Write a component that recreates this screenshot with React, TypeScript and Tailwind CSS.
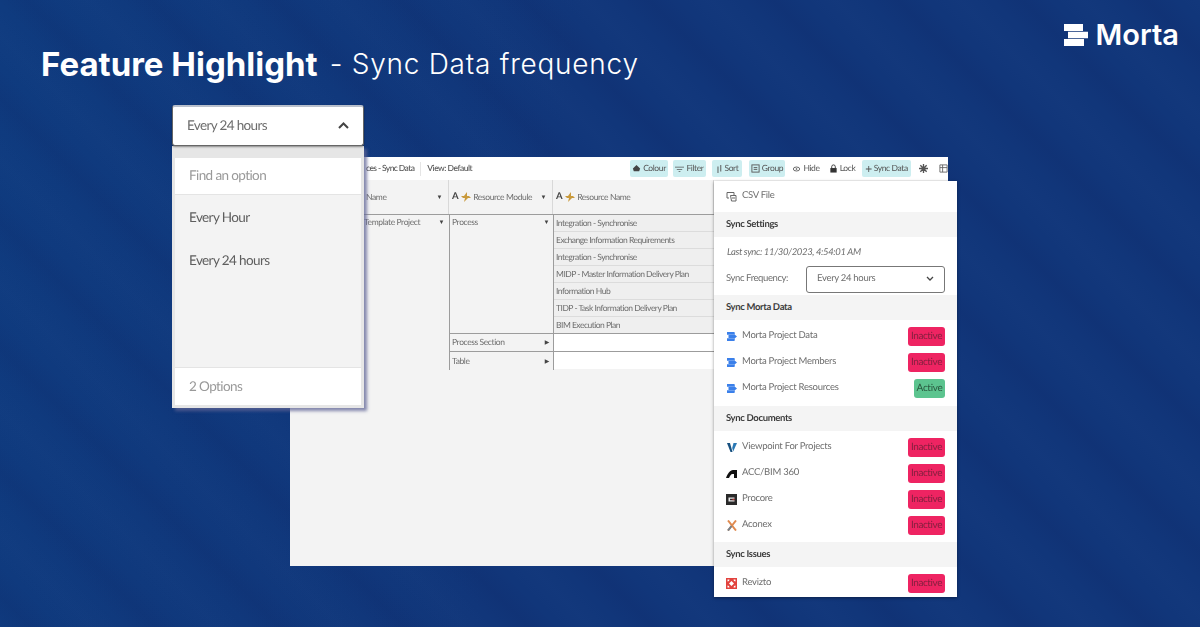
const lato = "font-['Lato','Liberation_Sans',sans-serif] [text-rendering:geometricPrecision]";

function Bolt() {
  return (
    <svg width="10" height="10" viewBox="0 0 10 10" className="shrink-0">
      <path d="M6 0 3 4H0l2 2h2L3 10l4-4h3L8 4H6z" fill="#c99a3c" />
    </svg>
  );
}

function HeaderCell({ label, className, icons = true, arrow = true }: { label: string; className: string; icons?: boolean; arrow?: boolean }) {
  return (
    <div className={`flex items-center gap-[2px] h-full whitespace-nowrap border-r border-[#d8d8d8] text-[8.5px] tracking-[-0.4px] text-[#6e6e6e] ${className}`}>
      {icons && <span className="font-bold text-[9.5px] text-[#444] mr-[1px]">A</span>}
      {icons && <Bolt />}
      <span>{label}</span>
      {arrow && <span className="ml-auto text-[6px] text-[#444]">▼</span>}
    </div>
  );
}

function ToolBtn({ label, icon, on, w }: { label: string; icon: React.ReactNode; on?: boolean; w: string }) {
  return (
    <div className={`flex items-center justify-center gap-[2px] h-[17px] rounded-[2px] text-[8.5px] tracking-[-0.4px] whitespace-nowrap text-[#555] ${w} ${on ? "bg-[#cdeef0]" : ""}`}>
      {icon}
      <span>{label}</span>
    </div>
  );
}

function Section({ title }: { title: string }) {
  return (
    <div className="h-[25px] flex items-center bg-[#f4f4f4] pl-[12px] pt-[2px] text-[9.500px] tracking-[-0.35px] font-bold text-[#3c3c3c]">{title}</div>
  );
}

function Status({ active }: { active?: boolean }) {
  return active ? (
    <span className="h-[19px] w-[31px] flex items-center justify-center rounded-[3px] bg-[#5cc48f] text-[10px] tracking-[-0.3px] text-[#2a5a40]">Active</span>
  ) : (
    <span className="h-[19px] w-[37px] flex items-center justify-center rounded-[3px] bg-[#ee2462] text-[10px] tracking-[-0.4px] text-[#85203f]">Inactive</span>
  );
}

function Row({ icon, label, active }: { icon: React.ReactNode; label: string; active?: boolean }) {
  return (
    <div className="h-[26px] flex items-center pl-[12px] pr-[12px]">
      <span className="w-[11px] h-[12px] flex items-center justify-center shrink-0">{icon}</span>
      <span className="ml-[5px] text-[9.500px] tracking-[-0.25px] text-[#6e6e6e]">{label}</span>
      <span className="ml-auto">
        <Status active={active} />
      </span>
    </div>
  );
}

function SmallMorta() {
  return (
    <svg width="10" height="9" viewBox="0 0 10 9">
      <path d="M0 0h7.500l.5 2.800H0zM1.500 3.100h6.700L10 4.500 8.200 6H1.500zM0 6.200h8L7.500 9H0z" fill="#3b80ea" />
    </svg>
  );
}

const cellRows = [
  "Integration - Synchronise",
  "Exchange Information Requirements",
  "Integration - Synchronise",
  "MIDP - Master Information Delivery Plan",
  "Information Hub",
  "TIDP - Task Information Delivery Plan",
  "BIM Execution Plan",
];

function TableWindow() {
  return (
    <div className={`absolute left-[290px] top-[157px] w-[658px] h-[409px] bg-[#f3f3f3] overflow-hidden ${lato} blur-[0.3px]`}>
      <div className="h-[23px] bg-white flex items-center pl-[76px]">
        <span className="text-[8.500px] tracking-[-0.6px] font-medium text-[#555]">ces - Sync Data</span>
        <span className="w-px h-[14px] bg-[#e5e5e5] mx-[6px]" />
        <span className="text-[8.500px] tracking-[-0.5px] font-medium text-[#555]">View: Default</span>
        <div className="absolute left-[340px] top-[3px] flex items-center">
          <ToolBtn on w="w-[38px]" label="Colour" icon={<svg width="9" height="9" viewBox="0 0 10 10"><path d="M1 5 5 1l4 4-1 3H2z" fill="#444" /></svg>} />
          <ToolBtn on w="w-[33px] ml-[5px]" label="Filter" icon={<svg width="9" height="9" viewBox="0 0 10 10"><path d="M0 3h10v1H0zM2 5.500h6v1H2zM4 8h2v1H4z" fill="#555" /></svg>} />
          <ToolBtn on w="w-[30px] ml-[6px]" label="Sort" icon={<svg width="7" height="8" viewBox="0 0 8 10"><path d="M1.500 2h1.200v8H1.500zM5 0h1.200v8H5z" fill="#555" /></svg>} />
          <ToolBtn on w="w-[36px] ml-[7px]" label="Group" icon={<svg width="9" height="9" viewBox="0 0 10 10"><rect x="1" y="1" width="8" height="8" fill="none" stroke="#555" /><path d="M3 4h4M3 6h4" stroke="#555" /></svg>} />
          <ToolBtn w="w-[30px] ml-[6px]" label="Hide" icon={<svg width="9" height="8" viewBox="0 0 10 10"><ellipse cx="5" cy="5" rx="4" ry="2.500" fill="none" stroke="#444" /><circle cx="5" cy="5" r="1" fill="#444" /></svg>} />
          <ToolBtn w="w-[30px] ml-[6px]" label="Lock" icon={<svg width="9" height="9" viewBox="0 0 10 10"><rect x="1.500" y="4.500" width="7" height="5" fill="#333" /><path d="M3 5V3a2 2 0 0 1 4 0v2" fill="none" stroke="#333" /></svg>} />
          <ToolBtn on w="w-[49px] ml-[5px]" label="Sync Data" icon={<span className="text-[12px] leading-none">+</span>} />
          <svg width="9" height="9" viewBox="0 0 10 10" className="ml-[8px]"><path d="M5 0v10M0 5h10M1.500 1.500l7 7M8.500 1.500l-7 7" stroke="#555" strokeWidth="1.500" /></svg>
          <svg width="9" height="9" viewBox="0 0 10 10" className="ml-[11px]"><path d="M1 1h8v8H1zM1 4h8M4 1v8" fill="none" stroke="#666" /></svg>
        </div>
      </div>
      <div className="h-[35px] flex items-center border-b border-[#9c9c9c] w-[424px]">
        <HeaderCell label="Name" icons={false} className="w-[159px] pl-[76px] pr-[6px]" />
        <HeaderCell label="Resource Module" className="w-[104px] pl-[3px] pr-[6px]" />
        <HeaderCell label="Resource Name" arrow={false} className="w-[161px] pl-[3px] pr-[6px]" />
      </div>
      <div className="flex items-start w-[424px]">
        <div className="w-[159px] h-[155px] pl-[74px] pt-[1px] text-[8.500px] tracking-[-0.4px] text-[#6e6e6e] flex items-start justify-between pr-[5px]">
          <span>Template Project</span>
          <span className="text-[6px] text-[#444] mt-[2px]">▼</span>
        </div>
        <div className="w-[105px] flex flex-col border-l border-[#9c9c9c] border-r text-[8.500px] tracking-[-0.4px] text-[#6e6e6e]">
          <div className="h-[119px] border-b border-[#9c9c9c] flex justify-between pl-[2px] pr-[4px] pt-[1px]">
            <span>Process</span>
            <span className="text-[6px] text-[#444] mt-[2px]">▼</span>
          </div>
          <div className="h-[18px] border-b border-[#9c9c9c] flex items-center justify-between pl-[2px] pr-[4px]">
            <span>Process Section</span>
            <span className="text-[6px] text-[#444]">▶</span>
          </div>
          <div className="h-[18px] flex items-center justify-between pl-[2px] pr-[4px]">
            <span>Table</span>
            <span className="text-[6px] text-[#444]">▶</span>
          </div>
        </div>
        <div className="w-[160px] flex flex-col text-[8.500px] tracking-[-0.5px] text-[#6e6e6e]">
          <div className="h-[119px] border-b border-[#9c9c9c] flex flex-col bg-[#efefef]">
            {cellRows.map((r, i) => (
              <div key={i} className="h-[17px] shrink-0 border-b border-[#dcdcdc] last:border-b-0 flex items-center pl-[2px] whitespace-nowrap">{r}</div>
            ))}
          </div>
          <div className="h-[18px] bg-white border-b border-[#9c9c9c]" />
          <div className="h-[17px] bg-white" />
        </div>
      </div>
    </div>
  );
}

function SidePanel() {
  return (
    <div className={`absolute left-[714px] top-[181px] w-[243px] h-[416px] bg-white shadow-[0_1px_3px_rgba(0,0,0,0.4)] flex flex-col ${lato} blur-[0.3px]`}>
      <div className="h-[31px] flex items-center pl-[12px]">
        <svg width="11" height="11" viewBox="0 0 11 11"><path d="M1 4V1.500h7V4M1 4v3h2M4.500 4.500H10V10H5.500z" fill="none" stroke="#666" /><path d="M6 7h3" stroke="#666" /></svg>
        <span className="ml-[5px] text-[9.500px] tracking-[-0.3px] text-[#6e6e6e]">CSV File</span>
      </div>
      <Section title="Sync Settings" />
      <div className="h-[28px] flex items-center pl-[13px] pt-[4px] text-[9.500px] tracking-[-0.36px] italic text-[#6e6e6e]">Last sync: 11/30/2023, 4:54:01 AM</div>
      <div className="h-[28px] flex items-center pl-[12px] pr-[12px]">
        <span className="pt-[1px] text-[9.500px] tracking-[-0.4px] text-[#6e6e6e]">Sync Frequency:</span>
        <div className="ml-auto w-[139px] h-[27px] border-[1.5px] border-[#777] rounded-[3px] flex items-center pl-[10px] pr-[10px] text-[9.500px] tracking-[-0.3px] text-[#6e6e6e]">
          <span className="pt-[1px]">Every 24 hours</span>
          <svg className="ml-auto" width="8" height="6" viewBox="0 0 8 6"><path d="M1 1l3 3 3-3" fill="none" stroke="#444" strokeWidth="1.300" /></svg>
        </div>
      </div>
      <div className="mt-[2px]"><Section title="Sync Morta Data" /></div>
      <div className="pt-[3px]">
        <Row icon={<SmallMorta />} label="Morta Project Data" />
        <Row icon={<SmallMorta />} label="Morta Project Members" />
        <Row icon={<SmallMorta />} label="Morta Project Resources" active />
      </div>
      <div className="mt-[5px]"><Section title="Sync Documents" /></div>
      <div className="pt-[3px]">
        <Row
          icon={<svg width="10" height="11" viewBox="0 0 10 11"><path d="M0 1h3l2.500 9H3.500z" fill="#17507f" /><path d="M10 1H6.500L5.200 6l1 3.500z" fill="#2a78b4" /></svg>}
          label="Viewpoint For Projects"
        />
        <Row
          icon={<svg width="11" height="9" viewBox="0 0 11 9"><path d="M0 9C1.500 5 4 1 7 1h4v8H8V5H6.500C5 5 4 7 3 9z" fill="#111" /></svg>}
          label="ACC/BIM 360"
        />
        <Row
          icon={<svg width="11" height="11" viewBox="0 0 11 11"><rect width="11" height="11" fill="#2a2a2a" /><path d="M2.500 3.500h6v1.300H4v1.400h4.500v1.300h-6z" fill="#e8e8e8" /><rect x="6.500" y="4.800" width="2" height="1.400" fill="#b33" /></svg>}
          label="Procore"
        />
        <Row
          icon={<svg width="10" height="11" viewBox="0 0 10 11"><path d="M1 0.500l8 10M9 0.500 1 10.500" stroke="#e08a4f" strokeWidth="2" /><path d="M1 10.500 4.500 6" stroke="#75838f" strokeWidth="2" /></svg>}
          label="Aconex"
        />
      </div>
      <div className="mt-[4px]"><Section title="Sync Issues" /></div>
      <div className="pt-[3px]">
        <Row
          icon={
            <svg width="11" height="11" viewBox="0 0 11 11">
              <rect width="11" height="11" fill="#e2433e" />
              <path d="M5.500 3 8 5.500 5.500 8 3 5.500z" fill="#fff" />
              <path d="M1.500 1.500h2l-.5 1.500-1.500.5zM9.500 1.500h-2l.5 1.500 1.500.5zM1.500 9.500h2L3 8l-1.500-.5zM9.500 9.500h-2L8 8l1.500-.5z" fill="#fff" />
            </svg>
          }
          label="Revizto"
        />
      </div>
    </div>
  );
}

function Dropdown() {
  return (
    <div className={`absolute left-[172px] top-[105px] w-[192px] ${lato} blur-[0.3px]`}>
      <div className="h-[41px] bg-white border border-[#666] border-t-[2px] border-t-[#b9c0cc] rounded-[3px] shadow-[0_1px_2px_rgba(0,0,0,0.4)] flex items-center pl-[14px] pr-[14px] pb-[2px] text-[13.500px] tracking-[-0.65px] text-[#6c6c6c] relative z-10">
        <span>Every 24 hours</span>
        <svg className="ml-auto" width="11" height="7" viewBox="0 0 11 7"><path d="M1 6l4.500-4.500L10 6" fill="none" stroke="#444" strokeWidth="2" /></svg>
      </div>
      <div className="h-[262px] bg-[#f3f3f3] border-[3px] border-[#e6e6e6] border-t-[12px] shadow-[3px_3px_3px_rgba(95,100,150,0.75)] flex flex-col text-[13.500px] tracking-[-0.6px]">
        <div className="h-[37px] shrink-0 bg-white border-b border-[#e4e4e4] flex items-center pl-[14px] pb-[1px] text-[#999]">Find an option</div>
        <div className="flex-1 pl-[14px] flex flex-col text-[#5e5e5e]">
          <div className="h-[44px] flex items-center">Every Hour</div>
          <div className="h-[43px] flex items-center">Every 24 hours</div>
        </div>
        <div className="h-[38px] shrink-0 bg-white border-t border-[#e4e4e4] flex items-center pl-[14px] text-[#999]">2 Options</div>
      </div>
    </div>
  );
}

export default function App() {
  return (
    <div className="relative w-[1200px] h-[627px] overflow-hidden bg-[repeating-linear-gradient(45deg,rgba(10,20,80,0)_0px,rgba(10,20,80,0.09)_22px,rgba(10,20,80,0)_44px,rgba(120,170,230,0.015)_66px,rgba(10,20,80,0)_88px),linear-gradient(100deg,#0f3b7f_0%,#11367a_45%,#11367a_100%)]">
      <div className="flex items-start justify-between pl-[41px] pr-[21px]">
        <div className="flex items-baseline pt-[42px] text-white">
          <span className="font-['Inter',sans-serif] font-bold text-[33px] leading-[44px]">Feature Highlight</span>
          <span className="ml-[12px] relative bottom-[2px] font-['Inter',sans-serif] font-light text-[28px] leading-[40px] tracking-[0.75px]">- Sync Data frequency</span>
        </div>
        <div className="flex items-center pt-[20px] text-white">
          <svg width="24" height="22" viewBox="0 0 24 22">
            <path d="M0 0h19v7H0zM4 7.800h20v6.400H4zM0 15h20v7H0z" fill="#fff" />
          </svg>
          <span className="ml-[8px] font-['Inter',sans-serif] font-semibold text-[29px] leading-[30px]">Morta</span>
        </div>
      </div>
      <TableWindow />
      <SidePanel />
      <Dropdown />
    </div>
  );
}
